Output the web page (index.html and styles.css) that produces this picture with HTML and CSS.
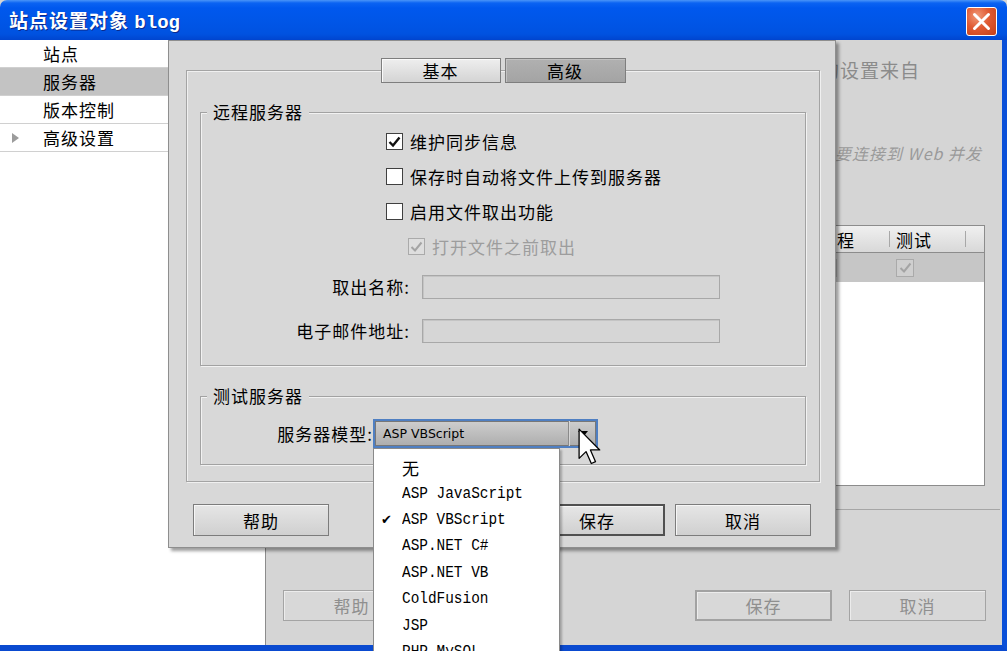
FILE: index.html
```html
<!DOCTYPE html>
<html lang="zh-CN">
<head>
<meta charset="utf-8">
<title>站点设置对象 blog</title>
<link rel="stylesheet" href="styles.css">
</head>
<body>
<div class="win">
  <header class="titlebar">
    <span class="title">站点设置对象 <span class="title-mono">blog</span></span>
    <span class="close"><svg width="29" height="27" viewBox="0 0 29 27"><path d="M7.5 6.5 L21.5 20.5 M21.5 6.5 L7.5 20.5" stroke="#fff" stroke-width="3" stroke-linecap="round"/></svg></span>
  </header>
  <div class="frame">
    <nav class="sidebar">
      <div class="nav-item">站点</div>
      <div class="nav-item is-selected">服务器</div>
      <div class="nav-item">版本控制</div>
      <div class="nav-item"><span class="nav-tri"></span>高级设置</div>
    </nav>
    <section class="panel">
      <p class="intro">此对话框的设置来自</p>
      <p class="note">如果要连接到 Web 并发</p>
      <div class="grid-table">
        <div class="th-row">
          <span class="th">名称</span>
          <span class="th">地址</span>
          <span class="th">连接</span>
          <span class="th">远程</span>
          <span class="th">测试</span>
          <span class="th"></span>
        </div>
        <div class="td-row">
          <span class="td"></span>
          <span class="td"></span>
          <span class="td"></span>
          <span class="td"><span class="box is-disabled"></span></span>
          <span class="td"><span class="box is-disabled"><svg width="13" height="12" viewBox="0 0 13 12"><path d="M1.5 6 L5 9.5 L11.5 1.5" fill="none" stroke="#a4a4a4" stroke-width="2"/></svg></span></span>
          <span class="td"></span>
        </div>
        <div class="tbody"></div>
      </div>
      <div class="tools"></div>
      <div class="panel-actions">
        <button class="btn btn-dim">帮助</button>
        <div class="btn-group">
          <button class="btn btn-dim btn-default-dim">保存</button>
          <button class="btn btn-dim">取消</button>
        </div>
      </div>
    </section>
  </div>

  <div class="dialog">
    <div class="tabs">
      <span class="tab">基本</span>
      <span class="tab is-active">高级</span>
    </div>
    <div class="tabpanel">
      <fieldset class="group">
        <legend>远程服务器</legend>
        <div class="checks">
          <div class="check"><span class="box"><svg width="13" height="12" viewBox="0 0 13 12"><path d="M1.5 6 L5 9.5 L11.5 1.5" fill="none" stroke="#111" stroke-width="2.4"/></svg></span>维护同步信息</div>
          <div class="check"><span class="box"></span>保存时自动将文件上传到服务器</div>
          <div class="check"><span class="box"></span>启用文件取出功能</div>
          <div class="check check-disabled"><span class="box is-disabled"><svg width="13" height="12" viewBox="0 0 13 12"><path d="M1.5 6 L5 9.5 L11.5 1.5" fill="none" stroke="#a4a4a4" stroke-width="2"/></svg></span>打开文件之前取出</div>
        </div>
        <div class="fields">
          <span class="field-label">取出名称:</span><span class="input"></span>
          <span class="field-label">电子邮件地址:</span><span class="input"></span>
        </div>
      </fieldset>
      <fieldset class="group group-test">
        <legend>测试服务器</legend>
        <div class="model-row">
          <span class="field-label">服务器模型:</span>
          <div class="select"><span class="select-text">ASP VBScript</span><span class="select-btn"><i class="select-arrow"></i></span></div>
        </div>
      </fieldset>
    </div>
    <div class="dialog-actions">
      <button class="btn">帮助</button>
      <div class="btn-group btn-group-tight">
        <button class="btn btn-default">保存</button>
        <button class="btn">取消</button>
      </div>
    </div>
  </div>

  <ul class="menu">
    <li class="menu-item"><span class="mark"></span><span class="cjk">无</span></li>
    <li class="menu-item"><span class="mark"></span><span class="mono">ASP JavaScript</span></li>
    <li class="menu-item"><span class="mark">✔</span><span class="mono">ASP VBScript</span></li>
    <li class="menu-item"><span class="mark"></span><span class="mono">ASP.NET C#</span></li>
    <li class="menu-item"><span class="mark"></span><span class="mono">ASP.NET VB</span></li>
    <li class="menu-item"><span class="mark"></span><span class="mono">ColdFusion</span></li>
    <li class="menu-item"><span class="mark"></span><span class="mono">JSP</span></li>
    <li class="menu-item"><span class="mark"></span><span class="mono">PHP MySQL</span></li>
  </ul>

  <svg class="cursor" width="23" height="37" viewBox="0 0 12.6 20.2"><path d="M0.6 0.6 L0.6 16.6 L4.4 12.9 L7.3 19.4 L9.6 18.4 L6.8 12 L11.9 12 Z" fill="#fff" stroke="#000" stroke-width="0.7" stroke-linejoin="round"/></svg>
</div>
</body>
</html>
```

FILE: styles.css
```css
* { box-sizing: border-box; }
html, body { margin: 0; padding: 0; }
body {
  width: 1007px;
  height: 651px;
  overflow: hidden;
  font-family: "Noto Sans CJK SC", "Noto Sans", sans-serif;
  font-size: 17px;
  color: #000;
  background: #d5d5d5;
}
.win {
  position: relative;
  width: 1007px;
  height: 651px;
  overflow: hidden;
  display: flex;
  flex-direction: column;
}

/* title bar */
.titlebar {
  height: 40px;
  flex: none;
  display: flex;
  align-items: center;
  justify-content: space-between;
  padding: 2px 10px 0 9px;
  background: linear-gradient(#4a95f8 0, #0b63f2 3px, #0058ee 8px, #0056e8 50%, #0052e0 85%, #0045cf 100%);
  border-radius: 7px 7px 0 0;
}
.title {
  color: #fff;
  font-weight: 700;
  font-size: 19px;
  letter-spacing: 1px;
  line-height: 24px;
  text-shadow: 1px 1px 0 #0b2a8c;
  white-space: pre;
}
.title-mono { font-family: "Liberation Mono", monospace; letter-spacing: 0; }
.close {
  width: 31px;
  height: 29px;
  border: 1px solid #fff;
  border-radius: 3px;
  background: radial-gradient(circle at 35% 30%, #f09a78 0, #e05a33 45%, #c43f18 100%);
  display: flex;
}

/* main window */
.frame {
  flex: 1;
  min-height: 0;
  display: flex;
  border-right: 5px solid #0a4fd8;
  border-bottom: 6px solid #0a4ad0;
}
.sidebar {
  width: 266px;
  flex: none;
  background: #fff;
  border-right: 1px solid #8c8c8c;
}
.nav-item {
  height: 28px;
  border-bottom: 1px solid #d0d0d0;
  display: flex;
  align-items: center;
  padding-left: 43px;
  letter-spacing: 1px;
}
.nav-item.is-selected { background: #c3c3c3; }
.nav-tri {
  width: 0;
  height: 0;
  border-left: 7px solid #9c9c9c;
  border-top: 5px solid transparent;
  border-bottom: 5px solid transparent;
  margin-left: -31px;
  margin-right: 24px;
}
.panel {
  flex: 1;
  min-width: 0;
  display: flex;
  flex-direction: column;
  background: #d5d5d5;
}
.intro {
  margin: 18px 0 0;
  line-height: 24px;
  font-size: 19px;
  letter-spacing: 1px;
  color: #8b8b8b;
  text-align: right;
  padding-right: 82px;
  white-space: nowrap;
}
.note {
  margin: 60px 0 0;
  line-height: 22px;
  font-size: 16px;
  letter-spacing: 1px;
  font-style: italic;
  color: #9a9a9a;
  text-align: right;
  padding-right: 20px;
  white-space: nowrap;
}
.grid-table {
  margin: 61px 17px 0 34px;
  display: flex;
  flex-direction: column;
}
.th-row, .td-row {
  display: grid;
  grid-template-columns: 290px 110px 1fr 77px 76px 19px;
}
.th-row {
  height: 28px;
  border: 1px solid #8c8c8c;
  background: linear-gradient(#f0f0f0, #d8d8d8);
}
.th {
  display: flex;
  align-items: center;
  padding-left: 7px;
  letter-spacing: 1px;
  background: linear-gradient(#a8a8a8, #a8a8a8) left center / 1px 16px no-repeat;
}
.th:first-child { background: none; }
.td-row {
  height: 29px;
  background: #c6c6c6;
  border-left: 1px solid #8c8c8c;
  border-right: 1px solid #8c8c8c;
}
.td {
  display: flex;
  align-items: center;
  padding-left: 7px;
}
.tbody {
  height: 204px;
  background: #fff;
  border: 1px solid #8c8c8c;
  border-top: none;
}
.tools {
  height: 24px;
  margin: 0 2px 0 17px;
  border-bottom: 1px solid #a6a6a6;
}
.panel-actions {
  margin-top: 80px;
  display: flex;
  justify-content: space-between;
  padding: 0 16px 0 17px;
}
.btn-group { display: flex; gap: 17px; }
.btn-group-tight { gap: 10px; }
.btn {
  width: 136px;
  height: 32px;
  padding: 0;
  font-family: inherit;
  font-size: 17px;
  letter-spacing: 1px;
  color: #000;
  border: 1px solid #7c7c7c;
  background: linear-gradient(#e6e6e6, #d0d0d0);
  box-shadow: inset 1px 1px 0 #f6f6f6;
}
.panel-actions .btn { width: 137px; height: 31px; border-color: #a4a4a4; background: #d8d8d8; box-shadow: inset 1px 1px 0 #ececec; }
.btn-dim { color: #8f8f8f; }
.panel-actions .btn-default-dim { border: 2px solid #a2a2a2; }
.btn-default { border: 2px solid #505050; }

/* dialog */
.dialog {
  position: absolute;
  left: 168px;
  top: 40px;
  width: 668px;
  height: 508px;
  background: #d8d8d8;
  border: 1px solid #8e8e8e;
  box-shadow: 3px 3px 3px rgba(0, 0, 0, 0.38);
  padding: 17px 15px 0 17px;
}
.tabs {
  position: relative;
  z-index: 1;
  display: flex;
  justify-content: center;
  gap: 4px;
  height: 25px;
}
.tab {
  width: 120px;
  height: 25px;
  border: 1px solid #7e7e7e;
  display: flex;
  align-items: center;
  justify-content: center;
  letter-spacing: 1px;
  background: linear-gradient(#eeeeee, #d4d4d4);
  box-shadow: inset 1px 1px 0 #fafafa;
}
.tab.is-active {
  width: 121px;
  background: linear-gradient(#b0b0b0, #a4a4a4);
  box-shadow: inset 1px 1px 0 #c2c2c2;
}
.tabpanel {
  margin-top: -13px;
  border: 1px solid #a4a4a4;
  box-shadow: inset 1px 1px 0 #f0f0f0, 1px 1px 0 #f0f0f0;
  padding: 31px 13px 16px 13px;
}
.group {
  margin: 0;
  padding: 0;
  min-width: 0;
  border: 1px solid #a2a2a2;
  box-shadow: inset 1px 1px 0 #f2f2f2, 1px 1px 0 #f2f2f2;
}
.group legend {
  margin-left: 6px;
  padding: 0 6px;
  line-height: 20px;
  letter-spacing: 1px;
  background: #d8d8d8;
}
.group-test { margin-top: 20px; }
.checks {
  padding: 2px 0 0 185px;
}
.check {
  height: 35px;
  display: flex;
  align-items: center;
  gap: 7px;
  letter-spacing: 1px;
}
.box {
  width: 17px;
  height: 17px;
  flex: none;
  border: 1px solid #404040;
  background: #fff;
  display: flex;
  align-items: center;
  justify-content: center;
}
.box.is-disabled {
  border-color: #aaaaaa;
  background: #dedede;
}
.td .box.is-disabled { width: 18px; height: 18px; background: #cfcfcf; }
.check-disabled { margin-left: 22px; color: #9d9d9d; }
.fields {
  display: grid;
  grid-template-columns: 209px 298px;
  grid-auto-rows: 24px;
  column-gap: 12px;
  row-gap: 20px;
  margin-top: 11px;
  padding-bottom: 22px;
}
.field-label {
  text-align: right;
  align-self: center;
  letter-spacing: 1px;
  line-height: 20px;
  white-space: nowrap;
}
.input {
  border: 1px solid #a8a8a8;
  background: #d6d6d6;
  box-shadow: inset 1px 1px 0 #c4c4c4;
}
.model-row {
  display: grid;
  grid-template-columns: 172px 225px;
  padding: 13px 0 16px;
}
.select {
  height: 29px;
  border: 2px solid #4f7fc2;
  background: linear-gradient(#cecece, #adadad);
  box-shadow: inset 0 0 0 1px #777;
  display: flex;
  align-items: center;
}
.select-text {
  flex: 1;
  font-family: "DejaVu Sans", sans-serif;
  font-size: 12.5px;
  padding-left: 8px;
}
.select-btn {
  width: 28px;
  height: 100%;
  border-left: 1px solid #8a8a8a;
  box-shadow: inset 1px 0 0 #d6d6d6;
  display: flex;
  align-items: center;
  justify-content: center;
}
.select-arrow {
  width: 0;
  height: 0;
  border-top: 6px solid #000;
  border-left: 5px solid transparent;
  border-right: 5px solid transparent;
}
.dialog-actions {
  margin-top: 22px;
  display: flex;
  justify-content: space-between;
  padding: 0 9px 0 7px;
}

/* dropdown */
.menu {
  position: absolute;
  left: 373px;
  top: 448px;
  width: 187px;
  height: 215px;
  margin: 0;
  padding: 5px 0 0;
  list-style: none;
  background: #fff;
  border: 1px solid #8a8a8a;
  box-shadow: 2px 2px 2px rgba(0, 0, 0, 0.25);
}
.menu-item {
  height: 26.4px;
  display: flex;
  align-items: center;
  white-space: pre;
}
.mono {
  font-family: "Liberation Mono", monospace;
  font-size: 16px;
  transform: scaleX(0.9);
  transform-origin: left center;
}
.mark {
  width: 28px;
  flex: none;
  padding-left: 7px;
  font-family: "DejaVu Sans", sans-serif;
  font-size: 13px;
}
.cjk {
  font-family: "Noto Sans CJK SC", sans-serif;
  font-size: 17px;
}
.cursor {
  position: absolute;
  left: 578px;
  top: 428px;
}
```
